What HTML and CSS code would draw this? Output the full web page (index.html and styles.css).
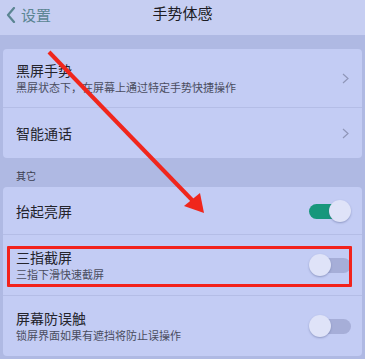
FILE: index.html
```html
<!DOCTYPE html>
<html lang="zh-CN">
<head>
  <meta charset="UTF-8">
  <title>手势体感</title>
  <link rel="stylesheet" href="styles.css">
</head>
<body>
  <div class="page">
    <div class="header">
      <div class="back">
        <svg width="10" height="16" viewBox="0 0 10 16"><path d="M8 1 L2 8 L8 15" fill="none" stroke="#5b8592" stroke-width="2.2" stroke-linecap="round" stroke-linejoin="round"/></svg>
        <span>设置</span>
      </div>
      <div class="title">手势体感</div>
    </div>

    <div class="card">
      <div class="row row-sub">
        <div class="text">
          <p class="name">黑屏手势</p>
          <p class="desc">黑屏状态下，在屏幕上通过特定手势快捷操作</p>
        </div>
        <svg class="chev" width="7" height="11" viewBox="0 0 7 11"><path d="M1 1 L6 5.5 L1 10" fill="none" stroke="#8f96b8" stroke-width="1.2"/></svg>
      </div>
      <div class="row row-one">
        <div class="text">
          <p class="name">智能通话</p>
        </div>
        <svg class="chev" width="7" height="11" viewBox="0 0 7 11"><path d="M1 1 L6 5.5 L1 10" fill="none" stroke="#8f96b8" stroke-width="1.2"/></svg>
      </div>
    </div>

    <div class="section">其它</div>

    <div class="card">
      <div class="row row-one row-short">
        <div class="text">
          <p class="name">抬起亮屏</p>
        </div>
        <div class="switch on"><b></b><i></i></div>
      </div>
      <div class="row row-sub row-tall">
        <div class="text">
          <p class="name">三指截屏</p>
          <p class="desc">三指下滑快速截屏</p>
        </div>
        <div class="switch"><b></b><i></i></div>
      </div>
      <div class="row row-sub row-tall">
        <div class="text">
          <p class="name">屏幕防误触</p>
          <p class="desc">锁屏界面如果有遮挡将防止误操作</p>
        </div>
        <div class="switch"><b></b><i></i></div>
      </div>
    </div>

    <div class="mark"></div>
    <svg class="arrow" width="365" height="359" viewBox="0 0 365 359">
      <line x1="49" y1="52" x2="194" y2="202" stroke="#f0261c" stroke-width="4"/>
      <polygon points="204,213 184,206 200,193" fill="#f0261c"/>
    </svg>
  </div>
</body>
</html>
```

FILE: styles.css
```css
body {
  margin: 0;
  font-family: "Noto Sans CJK SC", "Noto Sans", sans-serif;
  background: #aeb8e2;
}
p {
  margin: 0;
}
.page {
  position: relative;
  width: 365px;
  height: 359px;
  overflow: hidden;
  background: #afb9e3;
}
.header {
  height: 35px;
  background: #c6cef2;
  display: flex;
  align-items: center;
  position: relative;
  margin-bottom: 14px;
}
.back {
  display: flex;
  align-items: center;
  gap: 5px;
  padding-left: 6px;
  color: #5b8592;
  font-size: 15px;
  margin-top: -6px;
}
.title {
  position: absolute;
  left: 0;
  right: 0;
  top: 2px;
  text-align: center;
  font-size: 15px;
  color: #1c1c24;
  pointer-events: none;
}
.card {
  margin: 0 3px;
  background: #c3ccf4;
  border-radius: 4px;
}
.row {
  display: flex;
  align-items: center;
  justify-content: space-between;
  padding: 0 11px 0 13px;
  border-bottom: 1px solid #b4bde6;
}
.row:last-child {
  border-bottom: none;
}
.row-sub {
  height: 58px;
}
.row-one {
  height: 50px;
}
.row-short {
  height: 47px;
}
.row-tall {
  height: 60px;
}
.name {
  font-size: 14px;
  color: #24242c;
  line-height: 18px;
}
.desc {
  font-size: 11px;
  color: #4a4d5e;
  line-height: 17px;
}
.chev {
  margin-right: 2px;
}
.section {
  height: 29px;
  padding-left: 16px;
  font-size: 10px;
  color: #3c3f50;
  line-height: 35px;
}
.switch {
  position: relative;
  width: 42px;
  height: 22px;
}
.switch b {
  position: absolute;
  top: 4px;
  right: 0;
  width: 32px;
  height: 15px;
  border-radius: 8px;
  background: #a6aed8;
}
.switch i {
  position: absolute;
  top: 0;
  left: 0;
  width: 22px;
  height: 22px;
  border-radius: 50%;
  background: #dfe3f8;
  box-shadow: 0 1px 2px rgba(80, 90, 140, 0.45);
}
.switch.on b {
  left: 0;
  right: auto;
  background: #17977c;
}
.switch.on i {
  left: 20px;
}
.mark {
  position: absolute;
  left: 7px;
  top: 246px;
  width: 339px;
  height: 35px;
  border: 3px solid #f2221c;
  border-radius: 1px;
}
.arrow {
  position: absolute;
  left: 0;
  top: 0;
}
```
